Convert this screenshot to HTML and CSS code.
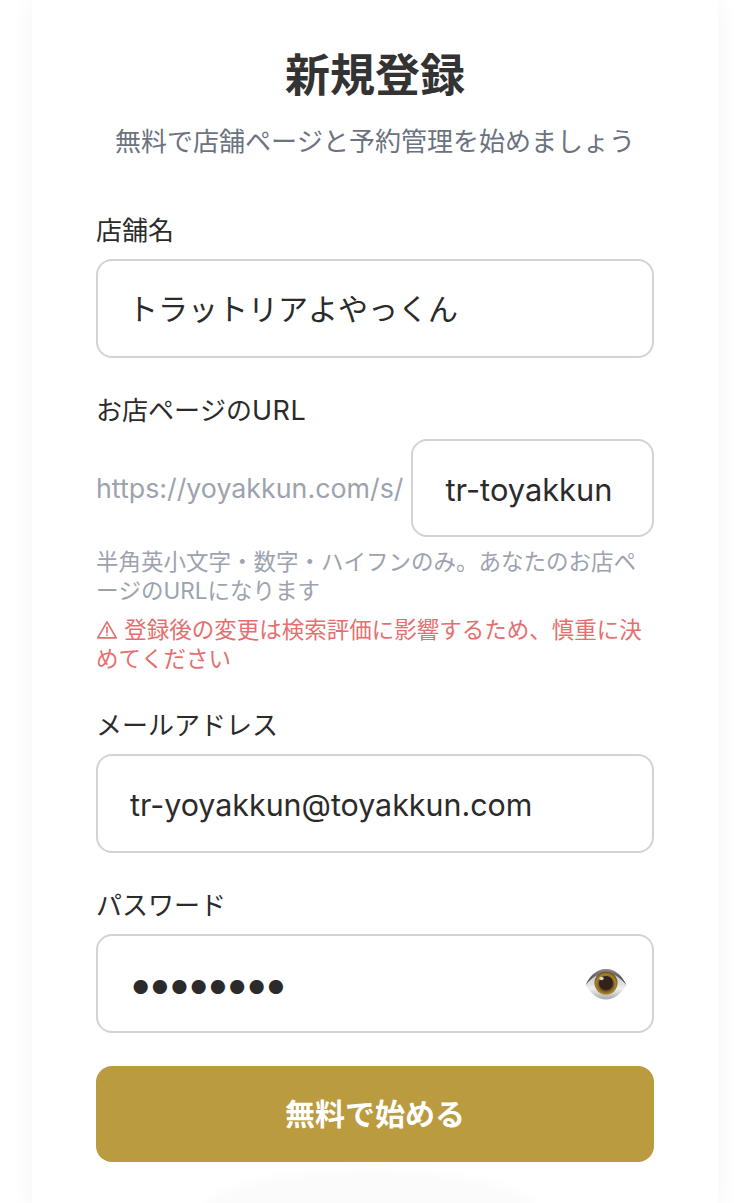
FILE: index.html
```html
<!DOCTYPE html>
<html lang="ja">
<head>
    <meta charset="UTF-8">
    <meta name="viewport" content="width=device-width, initial-scale=1.0">
    <title>新規登録</title>
    <link rel="stylesheet" href="styles.css">
</head>
<body>
    <div class="card">
        <h1 class="title">新規登録</h1>
        <p class="subtitle">無料で店舗ページと予約管理を始めましょう</p>
        <form class="signup-form">
            <div class="form-control">
                <label for="shop-name">店舗名</label>
                <input type="text" id="shop-name" class="text-input name-input" value="トラットリアよやっくん">
            </div>
            <div class="form-control">
                <label for="shop-slug">お店ページの<span class="label-latin">URL</span></label>
                <div class="url-row">
                    <span class="url-prefix">https://yoyakkun.com/s/</span>
                    <input type="text" id="shop-slug" class="text-input latin-input slug-input" value="tr-toyakkun">
                </div>
                <p class="hint">半角英小文字・数字・ハイフンのみ。あなたのお店ページのURLになります</p>
                <p class="warning"><svg class="warning-icon" viewBox="0 0 20 20" fill="none" stroke="currentColor" stroke-width="1.500" stroke-linejoin="round" stroke-linecap="round"><path d="M10 2.600 18.400 17.200H1.600Z"/><path d="M10 7.600v5"/><path d="M10 14.600v.4"/></svg> 登録後の変更は検索評価に影響するため、慎重に決めてください</p>
            </div>
            <div class="form-control">
                <label for="email">メールアドレス</label>
                <input type="text" id="email" class="text-input latin-input" value="tr-yoyakkun@toyakkun.com">
            </div>
            <div class="form-control password-control">
                <label for="password">パスワード</label>
                <div class="password-box">
                    <input type="password" id="password" class="text-input password-input" value="password">
                    <svg class="eye-icon" viewBox="0 0 42 32">
                        <defs>
                            <linearGradient id="eye-white" x1="0" y1="0" x2="0" y2="1">
                                <stop offset="0" stop-color="#b5b4b6"/>
                                <stop offset="0.65" stop-color="#f0efee"/>
                                <stop offset="1" stop-color="#a9a8aa"/>
                            </linearGradient>
                            <linearGradient id="eye-lid" x1="0" y1="0" x2="0" y2="1">
                                <stop offset="0" stop-color="#8e8c8f"/>
                                <stop offset="1" stop-color="#2f2d30"/>
                            </linearGradient>
                            <radialGradient id="eye-iris" cx="0.5" cy="0.55">
                                <stop offset="0.5" stop-color="#5a3a1c"/>
                                <stop offset="0.85" stop-color="#a8862c"/>
                                <stop offset="1" stop-color="#7a5a22"/>
                            </radialGradient>
                        </defs>
                        <path d="M0.500 17C6 6 13 1 21 1S36 6 41.500 17C36 26 29 31.500 21 31.500S6 26 0.500 17Z" fill="url(#eye-white)"/>
                        <path d="M0.500 17C6 6 13 1 21 1S36 6 41.500 17C35 9 28 5 21 5S7 9 0.500 17Z" fill="url(#eye-lid)"/>
                        <circle cx="21" cy="15" r="11.500" fill="url(#eye-iris)"/>
                        <circle cx="21" cy="15" r="7" fill="#33221a"/>
                        <ellipse cx="16.500" cy="10.500" rx="2.200" ry="1.800" fill="#d9d3ca"/>
                    </svg>
                </div>
            </div>
            <button type="button" class="submit-btn">無料で始める</button>
        </form>
        <div class="bottom-glow"></div>
    </div>
</body>
</html>
```

FILE: styles.css
```css
* {
    box-sizing: border-box;
}

html, body {
    height: 1203px;
    overflow: hidden;
}

body {
    margin: 0;
    background-color: #fff;
    color: #2b2b2b;
    font-family: Inter, "Noto Sans CJK JP", sans-serif;
    font-kerning: none;
}

.card {
    position: relative;
    width: 686px;
    height: 1203px;
    margin: 0 32px;
    padding: 48px 64px 0;
    background-color: #fff;
    box-shadow: 0 4px 24px rgba(0, 0, 0, 0.05);
}

.title {
    margin: 0;
    font-size: 45px;
    line-height: 56px;
    font-weight: 700;
    text-align: center;
    color: #333;
}

.subtitle {
    margin: 20px 0 0;
    font-size: 26px;
    line-height: 36px;
    color: #6b7280;
    text-align: center;
    white-space: nowrap;
}

.signup-form {
    margin-top: 52px;
}

.form-control {
    margin-bottom: 34px;
}

.password-control {
    margin-bottom: 33px;
}

.form-control label {
    display: block;
    margin-bottom: 9px;
    font-size: 26px;
    line-height: 38px;
    font-weight: 400;
}

.label-latin {
    font-size: 27px;
    letter-spacing: 0.500px;
}

.text-input {
    display: block;
    width: 100%;
    height: 98.500px;
    padding: 0 32px;
    border: 2px solid #d2d3d6;
    border-radius: 16px;
    background-color: #fff;
    color: #2b2b2b;
    font-family: inherit;
    font-kerning: normal;
    font-size: 30.400px;
}

.latin-input {
    padding-top: 3px;
}

.name-input {
    padding-left: 30px;
    padding-bottom: 3px;
    font-size: 30px;
}

.url-row {
    display: flex;
    align-items: center;
    gap: 8px;
}

.url-prefix {
    font-size: 26.800px;
    font-kerning: normal;
    color: #9ca3af;
    white-space: nowrap;
}

.slug-input {
    flex: 1;
    min-width: 0;
    font-size: 30.800px;
}

.hint {
    margin: 10px 0 0;
    font-size: 22.500px;
    line-height: 29px;
    color: #9ca3af;
}

.warning {
    margin: 10px 0 0;
    font-size: 22.500px;
    line-height: 29px;
    color: #e46f6f;
}

.warning-icon {
    width: 22px;
    height: 22px;
    vertical-align: -3px;
}

.password-box {
    position: relative;
}

.password-input {
    height: 99.500px;
    padding-left: 30px;
    font-size: 45px;
    letter-spacing: -6px;
}

.eye-icon {
    position: absolute;
    top: 34px;
    right: 27px;
    width: 42px;
    height: 32px;
}

.submit-btn {
    display: block;
    width: 100%;
    height: 96px;
    padding-bottom: 6px;
    border: none;
    border-radius: 16px;
    background-color: #bb9b40;
    color: #fff;
    font-family: inherit;
    font-size: 30px;
    font-weight: 700;
    cursor: pointer;
}

.bottom-glow {
    position: absolute;
    top: 1170px;
    left: 168px;
    width: 340px;
    height: 90px;
    border-radius: 50%;
    background-color: #fbfbfc;
    filter: blur(5px);
}
```
